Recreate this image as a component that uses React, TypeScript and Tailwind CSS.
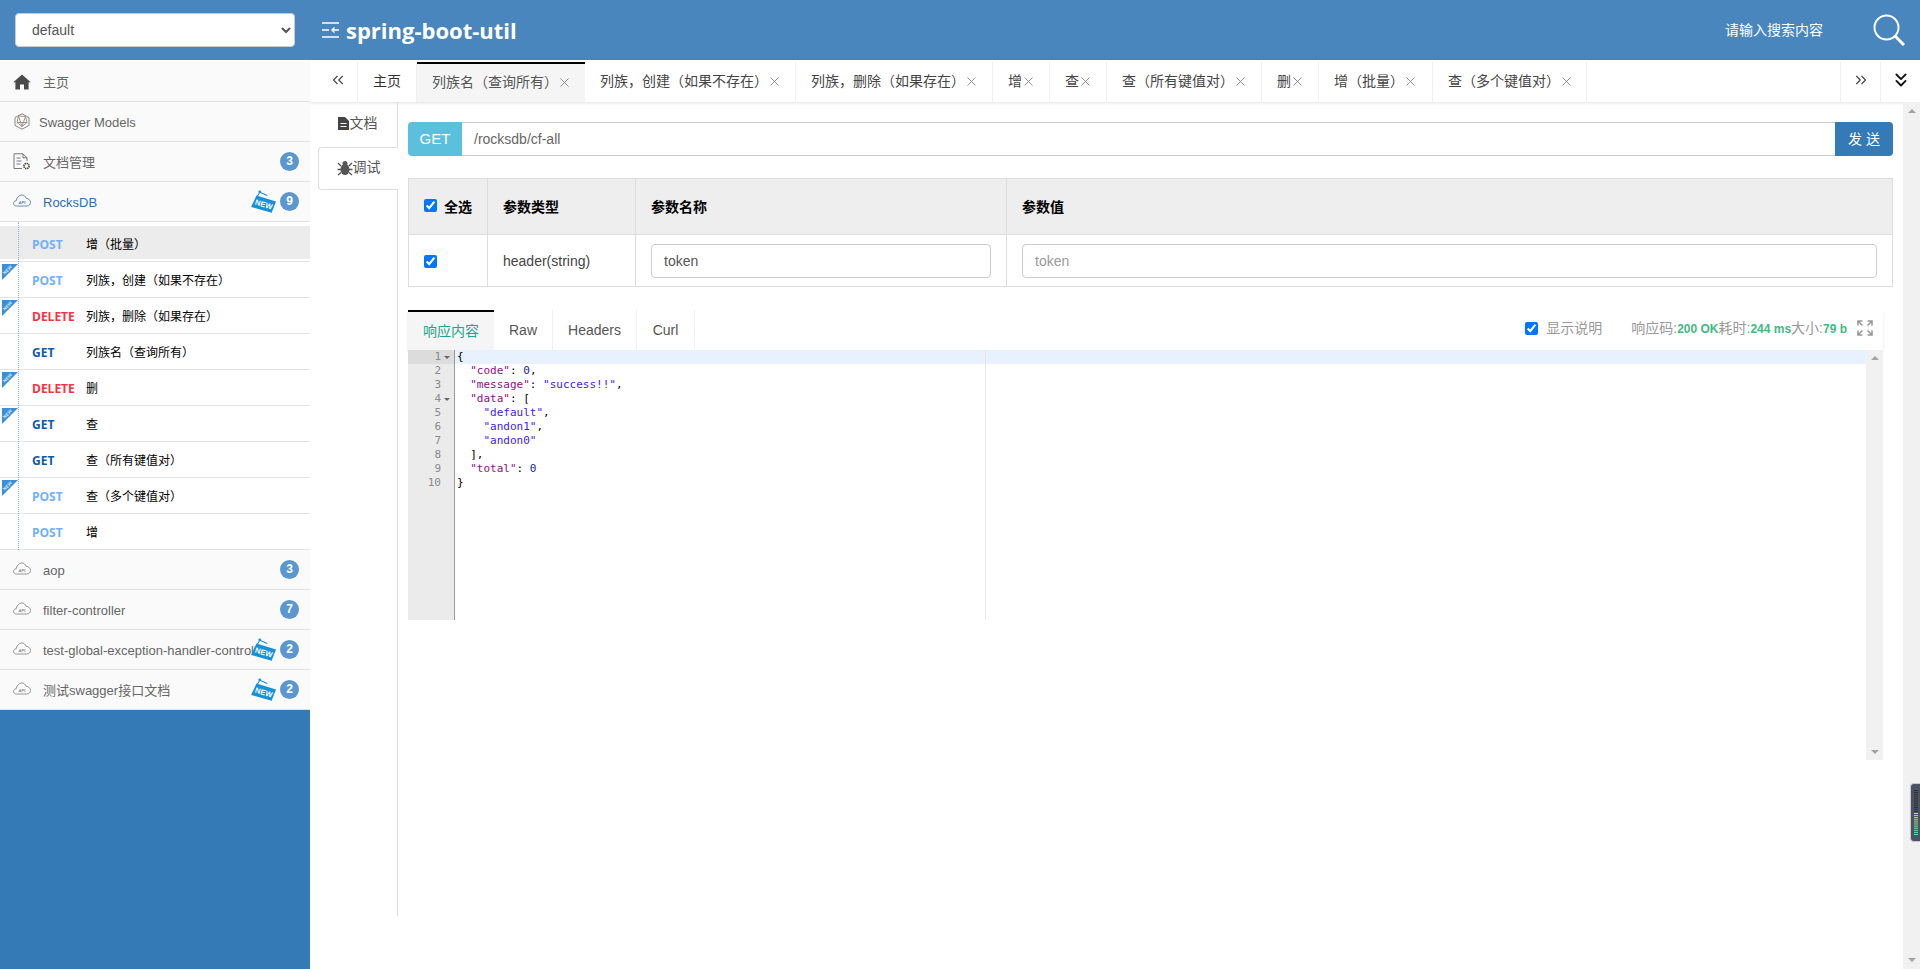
import type { ReactNode } from 'react';
import { ChevronsDown, ChevronsLeft, ChevronsRight, X } from 'lucide-react';

const sans = "font-['Liberation_Sans','Noto_Sans_CJK_SC',sans-serif]";

function NewTag() {
  return (
    <svg viewBox="0 0 24 24" className="absolute left-[250px] top-[7px] h-[26px] w-[26px]">
      <path d="M9 3 L6 8 M9 3 L16 6" stroke="#1c8fd8" strokeWidth="1" fill="none" />
      <circle cx="9" cy="2.5" r="1.2" fill="#1c8fd8" />
      <path d="M6 6 L24 11.5 L20 22 L1 16.5 Z" fill="#1591dc" />
      <text x="12.5" y="16.5" transform="rotate(17 12 15)" textAnchor="middle" fontSize="7" fontWeight="700" fill="#fff" fontFamily="Liberation Sans">NEW</text>
    </svg>
  );
}

function CornerRibbon() {
  return (
    <svg viewBox="0 0 16 16" className="absolute left-[2px] top-[2px] h-[16px] w-[16px]">
      <path d="M0 0 H16 L0 16 Z" fill="#3a8fd6" />
      <text x="5.5" y="7.5" transform="rotate(-45 5.5 6)" textAnchor="middle" fontSize="4.5" fontWeight="700" fill="#dbeafe" fontFamily="Liberation Sans">NEW</text>
    </svg>
  );
}

function CloudIcon({ color }: { color: string }) {
  return (
    <svg viewBox="0 0 18 13" className="-mt-[2px] h-[13px] w-[18px] shrink-0" fill="none" stroke={color} strokeWidth="0.9">
      <path d="M3.5 12 C1.6 12 0.5 10.8 0.5 9.3 C0.5 7.8 1.8 6.6 3.2 6.8 C3.6 3.6 6 1 8.8 1 C11 1 12.6 2.4 13.2 4.4 C15.6 4.4 17.5 6.2 17.5 8.4 C17.5 10.6 16 12 14 12 Z" />
      <text x="9" y="9.6" textAnchor="middle" fontSize="4.2" fontStyle="italic" fontWeight="700" fill={color} stroke="none" fontFamily="Liberation Sans">API</text>
    </svg>
  );
}

function HomeIcon() {
  return (
    <svg viewBox="0 0 18 16" className="h-[16px] w-[18px] shrink-0">
      <path d="M9 0.5 L0.3 8.3 L2.4 8.3 L2.4 15.6 L7 15.6 L7 10.4 L11 10.4 L11 15.6 L15.6 15.6 L15.6 8.3 L17.7 8.3 Z" fill="#4a4a4a" />
    </svg>
  );
}

function ModelIcon() {
  return (
    <svg viewBox="0 0 16 17" className="h-[17px] w-[16px] shrink-0" fill="none" stroke="#7a7a7a" strokeWidth="0.9">
      <path d="M8 0.8 L15 4.6 L15 12.4 L8 16.2 L1 12.4 L1 4.6 Z" />
      <path d="M4.5 3 L11.5 3.5 L13 9.5 L8 13.5 L3 9.5 Z" stroke="#b08a66" />
      <path d="M4.5 3 L8 13.5 L11.5 3.5 M3 9.5 L13 9.5" stroke="#8c8c8c" />
    </svg>
  );
}

function DocGearIcon() {
  return (
    <svg viewBox="0 0 18 17" className="h-[17px] w-[18px] shrink-0" fill="none" stroke="#6a6a6a" strokeWidth="0.9">
      <path d="M9 15.5 L1 15.5 L1 0.8 L10 0.8 L14 4.8 L14 8" />
      <path d="M10 0.8 L10 4.8 L14 4.8 M3.5 5 L7.5 5 M3.5 8 L8.5 8 M3.5 11 L7.5 11" />
      <circle cx="13.5" cy="13" r="2.6" stroke="#54483a" strokeWidth="1.6" strokeDasharray="1.4 0.6" />
    </svg>
  );
}

function SectionRow({ icon, title, count, isNew, active }: { icon: ReactNode; title: string; count?: number; isNew?: boolean; active?: boolean }) {
  return (
    <div className="relative flex h-[40px] items-center border-b border-[#e2e2e2] bg-[#fafafa]">
      <div className="flex w-[43px] shrink-0 justify-center pl-[1px]">{icon}</div>
      <span className={`whitespace-nowrap pt-[2px] text-[13px] ${active ? 'text-[#2f6fb0]' : 'text-[#666]'}`}>{title}</span>
      {isNew && <NewTag />}
      {count !== undefined && (
        <span className="absolute left-[280px] top-[10px] flex h-[19px] w-[19px] items-center justify-center rounded-full bg-[#5a96cf] pb-[1px] text-[12px] font-bold text-white">
          {count}
        </span>
      )}
    </div>
  );
}

type Api = { method: 'GET' | 'POST' | 'DELETE'; label: string; isNew?: boolean; active?: boolean };

const apis: Api[] = [
  { method: 'POST', label: '增（批量）', active: true },
  { method: 'POST', label: '列族，创建（如果不存在）', isNew: true },
  { method: 'DELETE', label: '列族，删除（如果存在）', isNew: true },
  { method: 'GET', label: '列族名（查询所有）' },
  { method: 'DELETE', label: '删', isNew: true },
  { method: 'GET', label: '查', isNew: true },
  { method: 'GET', label: '查（所有键值对）' },
  { method: 'POST', label: '查（多个键值对）', isNew: true },
  { method: 'POST', label: '增' },
];

const methodColor = { GET: 'text-[#0f5ba7]', POST: 'text-[#6fb0ff]', DELETE: 'text-[#f6323f]' };

function ApiRow({ api }: { api: Api }) {
  return (
    <div className="relative flex h-[36px] items-center border-b border-[#e4e4e4] pt-[2px]">
      {api.active && <div className="absolute inset-x-0 top-0 h-[33px] bg-[#ececec]" />}
      {api.isNew && <CornerRibbon />}
      <span className={`relative ml-[32px] w-[54px] font-['Open_Sans',sans-serif] text-[12px] font-bold ${methodColor[api.method]}`}>{api.method}</span>
      <span className="relative whitespace-nowrap text-[12px] text-black">{api.label}</span>
    </div>
  );
}

function Sidebar() {
  return (
    <aside className="flex w-[310px] shrink-0 flex-col bg-[#337ab7]">
      <div className="h-[2px] bg-white" />
      <SectionRow icon={<HomeIcon />} title="主页" />
      <div className="flex h-[40px] items-center gap-[9px] border-b border-[#e2e2e2] bg-[#fafafa] pl-[14px] text-[13px] text-[#666]">
        <ModelIcon />
        <span className="pt-[3px]">Swagger Models</span>
      </div>
      <SectionRow icon={<DocGearIcon />} title="文档管理" count={3} />
      <SectionRow icon={<CloudIcon color="#5b7fa8" />} title="RocksDB" count={9} isNew active />
      <div className="relative bg-white pt-[4px]">
        <div className="absolute bottom-0 left-[18px] top-0 z-10 border-l border-dotted border-[#8fb0d0]" />
        {apis.map((api) => <ApiRow key={api.label} api={api} />)}
      </div>
      <SectionRow icon={<CloudIcon color="#8a8a8a" />} title="aop" count={3} />
      <SectionRow icon={<CloudIcon color="#8a8a8a" />} title="filter-controller" count={7} />
      <SectionRow icon={<CloudIcon color="#8a8a8a" />} title="test-global-exception-handler-controller" count={2} isNew />
      <SectionRow icon={<CloudIcon color="#8a8a8a" />} title="测试swagger接口文档" count={2} isNew />
    </aside>
  );
}

const tabs = [
  { label: '列族，创建（如果不存在）', w: 'w-[211px]' },
  { label: '列族，删除（如果存在）', w: 'w-[197px]' },
  { label: '增', w: 'w-[57px]' },
  { label: '查', w: 'w-[57px]' },
  { label: '查（所有键值对）', w: 'w-[155px]' },
  { label: '删', w: 'w-[57px]' },
  { label: '增（批量）', w: 'w-[114px]' },
  { label: '查（多个键值对）', w: 'w-[154px]' },
];

function TabBar() {
  return (
    <div className="flex h-[42px] shrink-0 items-stretch pt-[2px] shadow-[0_1px_3px_rgba(0,0,0,0.12)]">
      <div className="flex w-[48px] items-center justify-end border-r border-[#f0f0f0] pb-[5px] pr-[10px]">
        <ChevronsLeft size={18} strokeWidth={1.5} className="text-[#444]" />
      </div>
      <div className="flex w-[59px] items-center justify-center border-r border-[#f0f0f0] pb-[2px] text-[14px] text-[#333]">主页</div>
      <div className="flex w-[168px] items-center border-t-2 border-black bg-[#f5f5f5] pb-[2px] pl-[15px] text-[14px] text-[#555]">
        列族名（查询所有）<X size={15} strokeWidth={1.3} className="-ml-[1px] text-[#777]" />
      </div>
      {tabs.map((tab) => (
        <div key={tab.label} className={`flex ${tab.w} items-center border-r border-[#f0f0f0] pb-[2px] pl-[15px] text-[14px] text-[#444]`}>
          {tab.label}<X size={15} strokeWidth={1.3} className="-ml-[1px] text-[#777]" />
        </div>
      ))}
      <div className="flex-1" />
      <div className="flex w-[40px] items-center justify-center border-l border-[#f0f0f0] pb-[5px]">
        <ChevronsRight size={18} strokeWidth={1.5} className="text-[#444]" />
      </div>
      <div className="flex w-[40px] items-center justify-center border-l border-[#f0f0f0] pb-[5px]">
        <ChevronsDown size={22} strokeWidth={2} className="text-[#111]" />
      </div>
    </div>
  );
}

function SideTabs() {
  return (
    <div className="flex h-[814px] w-[88px] shrink-0 flex-col items-end border-r border-[#ddd] pl-[8px]">
      <div className="flex h-[45px] w-full items-center justify-center gap-[1px] pb-[2px] text-[14px] text-[#555]">
        <svg viewBox="0 0 11 13" className="h-[13px] w-[11px]"><path d="M0 0 L7 0 L11 4 L11 13 L0 13 Z" fill="#444" /><path d="M2.5 6.5 H8.5 M2.5 9.5 H8.5" stroke="#fff" strokeWidth="1.2" /></svg>
        文档
      </div>
      <div className="-mr-px flex h-[43px] w-[80px] items-center justify-center rounded-l border border-r-0 border-[#ddd] bg-white pb-[2px] text-[14px] text-[#555]">
        <svg viewBox="0 0 16 16" className="h-[16px] w-[16px]"><ellipse cx="8" cy="9.5" rx="4.5" ry="5.5" fill="#555" /><circle cx="8" cy="3.5" r="2.5" fill="#555" /><path d="M1 3 L4 6 M15 3 L12 6 M0.5 9.5 H4 M15.5 9.5 H12 M1 15 L4 12.5 M15 15 L12 12.5" stroke="#555" strokeWidth="1.4" /></svg>
        调试
      </div>
    </div>
  );
}

function ParamTable() {
  return (
    <div className="mt-[22px] border border-[#ddd] text-[14px]">
      <div className="flex h-[56px] border-b border-[#ddd] bg-[#eee] font-bold text-black">
        <div className="flex w-[79px] items-center gap-[7px] border-r border-[#ddd] pl-[15px]">
          <input type="checkbox" defaultChecked className="-mt-[3px] h-[13px] w-[13px]" /><span className="pt-[2px]">全选</span>
        </div>
        <div className="flex w-[148px] items-center border-r border-[#ddd] pl-[15px] pt-[2px]">参数类型</div>
        <div className="flex w-[371px] items-center border-r border-[#ddd] pl-[15px] pt-[2px]">参数名称</div>
        <div className="flex flex-1 items-center pl-[15px] pt-[2px]">参数值</div>
      </div>
      <div className="flex h-[51px]">
        <div className="flex w-[79px] items-center border-r border-[#ddd] pl-[15px] pt-[1px]">
          <input type="checkbox" defaultChecked className="h-[13px] w-[13px]" />
        </div>
        <div className="flex w-[148px] items-center border-r border-[#ddd] pl-[15px] pt-[2px] text-[#444]">header(string)</div>
        <div className="flex w-[371px] items-center border-r border-[#ddd] px-[15px] pt-[1px]">
          <div className="flex h-[34px] w-full items-center rounded border border-[#ccc] px-[12px] pt-[1px] text-[#555]">token</div>
        </div>
        <div className="flex flex-1 items-center px-[15px] pt-[1px]">
          <div className="flex h-[34px] w-full items-center rounded border border-[#ccc] px-[12px] pt-[1px] text-[#999]">token</div>
        </div>
      </div>
    </div>
  );
}

const lines: ReactNode[] = [
  <>{'{'}</>,
  <>{'  '}<span className="text-[#881280]">"code"</span>: <span className="text-[#1a1aa6]">0</span>,</>,
  <>{'  '}<span className="text-[#881280]">"message"</span>: <span className="text-[#3a1cf0]">"success!!"</span>,</>,
  <>{'  '}<span className="text-[#881280]">"data"</span>: [</>,
  <>{'    '}<span className="text-[#3a1cf0]">"default"</span>,</>,
  <>{'    '}<span className="text-[#3a1cf0]">"andon1"</span>,</>,
  <>{'    '}<span className="text-[#3a1cf0]">"andon0"</span></>,
  <>{'  '}],</>,
  <>{'  '}<span className="text-[#881280]">"total"</span>: <span className="text-[#1a1aa6]">0</span></>,
  <>{'}'}</>,
];

function Editor() {
  return (
    <div className="flex h-[410px] w-[1475px] font-['DejaVu_Sans_Mono',monospace] text-[11px] leading-[14px] text-black">
      <div className="h-[270px] w-[47px] shrink-0 border-r border-[#999] bg-[#ebebeb] text-[#8a8a8a]">
        {lines.map((_, i) => (
          <div key={i} className={`relative h-[14px] pr-[13px] text-right ${i === 0 ? 'bg-[#dcdcdc]' : ''}`}>
            {i + 1}
            {(i === 0 || i === 3) && <span className="absolute right-[4px] top-[6px] h-0 w-0 border-x-[3px] border-t-[3px] border-x-transparent border-t-[#666]" />}
          </div>
        ))}
      </div>
      <div className="relative h-[270px] flex-1">
        <div className="absolute inset-x-0 top-0 h-[14px] bg-[#e8f2fe]" />
        <div className="absolute bottom-0 left-[530px] top-0 border-l border-[#e8e8e8]" />
        <pre className="relative pl-[2px] font-['DejaVu_Sans_Mono',monospace]">
          {lines.map((line, i) => <div key={i} className="h-[14px]">{line}</div>)}
        </pre>
      </div>
      <div className="flex h-[410px] w-[17px] shrink-0 flex-col items-center justify-between bg-[#f1f1f1] py-[6px]">
        <span className="h-0 w-0 border-x-[4px] border-b-[4px] border-x-transparent border-b-[#a3a3a3]" />
        <span className="h-0 w-0 border-x-[4px] border-t-[4px] border-x-transparent border-t-[#a3a3a3]" />
      </div>
    </div>
  );
}

function ResponsePanel() {
  return (
    <div className="mt-[23px]">
      <div className="flex h-[40px] w-[1475px] items-stretch text-[14px] shadow-[0_2px_3px_rgba(0,0,0,0.1)]">
        <div className="flex w-[86px] items-center justify-center border-t-2 border-black bg-[#f5f5f5] text-[#1aa58c]">响应内容</div>
        <div className="flex w-[59px] items-center justify-center border-r border-[#f0f0f0] text-[#555]">Raw</div>
        <div className="flex w-[84px] items-center justify-center border-r border-[#f0f0f0] text-[#555]">Headers</div>
        <div className="flex w-[58px] items-center justify-center border-r border-[#f0f0f0] text-[#555]">Curl</div>
        <div className="flex-1" />
        <div className="flex items-center pb-[4px] pr-[10px] text-[#999]">
          <input type="checkbox" defaultChecked className="mr-[8px] h-[13px] w-[13px]" />
          <span className="w-[85px]">显示说明</span>
          <span>响应码:<b className="text-[12px] text-[#42b983]">200 OK</b>耗时:<b className="text-[12px] text-[#42b983]">244 ms</b>大小:<b className="text-[12px] text-[#42b983]">79 b</b></span>
          <svg viewBox="0 0 16 16" className="ml-[10px] h-[16px] w-[16px]" fill="none" stroke="#999" strokeWidth="1.6">
            <path d="M1 5.5 V1 H5.5 M10.5 1 H15 V5.5 M15 10.5 V15 H10.5 M5.5 15 H1 V10.5 M1.5 1.5 L5.5 5.5 M14.5 1.5 L10.5 5.5 M14.5 14.5 L10.5 10.5 M1.5 14.5 L5.5 10.5" />
          </svg>
        </div>
      </div>
      <Editor />
    </div>
  );
}

function DebugPanel() {
  return (
    <div className="min-w-0 flex-1 px-[10px] pt-[20px]">
      <div className="flex h-[34px] text-[14px]">
        <div className="flex w-[54px] items-center justify-center rounded-l bg-[#5bc0de] text-[15px] text-white">GET</div>
        <div className="flex flex-1 items-center border-y border-[#ccc] pl-[12px] text-[#666]">/rocksdb/cf-all</div>
        <div className="flex w-[58px] items-center justify-center whitespace-pre rounded-r bg-[#337ab7] text-white">发 送</div>
      </div>
      <ParamTable />
      <ResponsePanel />
    </div>
  );
}

function MainScrollbar() {
  return (
    <div className="flex w-[17px] shrink-0 flex-col items-center justify-between bg-[#f1f1f1] py-[7px]">
      <span className="h-0 w-0 border-x-[4px] border-b-[4px] border-x-transparent border-b-[#a3a3a3]" />
      <span className="h-0 w-0 border-x-[4px] border-t-[4px] border-x-transparent border-t-[#a3a3a3]" />
    </div>
  );
}

const meterColors = ['#d7e04a', '#cfe34e', '#c2e655', '#b0e65c', '#9ee766', '#8be772', '#78e880', '#66e890', '#58e8a0', '#4ee8b0', '#48e8be'];

function MeterWidget() {
  return (
    <div className="absolute left-[1910px] top-[783px] h-[59px] w-[10px] overflow-hidden rounded-l border border-r-0 border-[#c8c8c8] bg-[#4b5262]">
      <svg viewBox="0 0 9 57" className="h-[57px] w-[9px]">
        {Array.from({ length: 11 }).map((_, i) => <rect key={i} x="3" y={6 + i * 2.1} width="4" height="1" fill="#2b2f3a" />)}
        {meterColors.map((c, i) => <rect key={c} x="3" y={29 + i * 2.1} width="4" height="1" fill={c} />)}
      </svg>
    </div>
  );
}

export default function App() {
  return (
    <div className={`flex h-[969px] flex-col overflow-hidden bg-white ${sans}`}>
      <header className="flex h-[60px] shrink-0 items-center bg-[#4886bd] text-white">
        <div className="w-[310px] pl-[15px]">
          <select defaultValue="default" className="h-[34px] w-[280px] rounded border border-[#ccc] bg-white pl-[12px] text-[14px] text-[#555]">
            <option>default</option>
          </select>
        </div>
        <svg viewBox="0 0 17 16" className="ml-[12px] h-[16px] w-[17px]" fill="none" stroke="#fff" strokeWidth="1.7">
          <path d="M0 1 H17 M0 15 H17 M0 8 H7 M10 8 H17" />
          <path d="M12.5 5.5 L10 8 L12.5 10.5" strokeWidth="1.4" />
        </svg>
        <span className="ml-[7px] font-['Open_Sans',sans-serif] text-[22px] font-bold">spring-boot-util</span>
        <span className="ml-auto text-[14px]">请输入搜索内容</span>
        <svg viewBox="0 0 32 32" className="ml-[50px] mr-[15px] h-[32px] w-[32px]" fill="none" stroke="#fff" strokeWidth="2">
          <circle cx="13.5" cy="13.5" r="12" />
          <path d="M22 22 L31 31" strokeWidth="3" />
        </svg>
      </header>
      <div className="flex min-h-0 flex-1">
        <Sidebar />
        <main className="flex min-w-0 flex-1 flex-col">
          <TabBar />
          <div className="flex min-h-0 flex-1">
            <SideTabs />
            <DebugPanel />
            <MainScrollbar />
          </div>
        </main>
      </div>
      <MeterWidget />
    </div>
  );
}
